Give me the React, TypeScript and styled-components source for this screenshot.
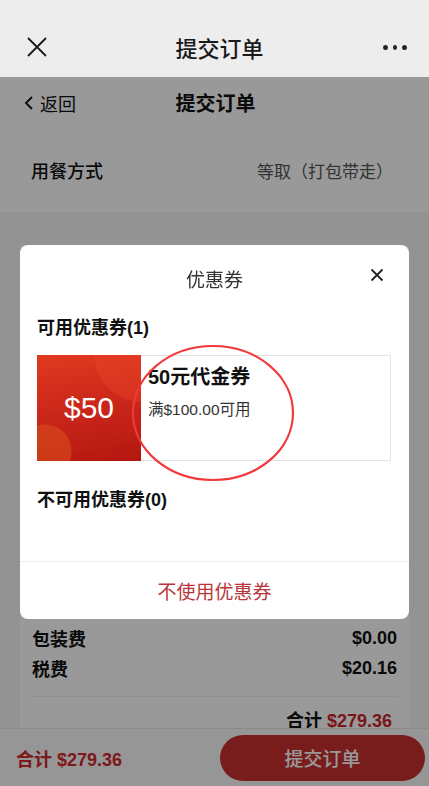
import React from "react";
import styled, { createGlobalStyle } from "styled-components";

const GlobalStyle = createGlobalStyle`
  html, body {
    margin: 0;
    padding: 0;
    background: #f5f5f5;
    font-family: "Liberation Sans", "Noto Sans CJK SC", "Noto Sans", sans-serif;
  }
  #root {
    min-height: 786px;
  }
`;

const App = () => {
  return (
    <Page>
      <GlobalStyle />
      <NavBar>
        <NavIcon>
          <svg width="22" height="22" viewBox="0 0 22 22">
            <path d="M2 2 L20 20 M20 2 L2 20" stroke="#1a1a1a" strokeWidth="1.8" fill="none" />
          </svg>
        </NavIcon>
        <NavTitle>提交订单</NavTitle>
        <Dots>
          <Dot />
          <Dot />
          <Dot />
        </Dots>
      </NavBar>

      <Header>
        <Back>
          <svg width="10" height="16" viewBox="0 0 10 16">
            <path d="M8 2 L2 8 L8 14" stroke="#111" strokeWidth="1.8" fill="none" />
          </svg>
          返回
        </Back>
        <HeaderTitle>提交订单</HeaderTitle>
        <Back style={{ visibility: "hidden" }} />
      </Header>

      <InfoRow>
        <Label>用餐方式</Label>
        <Value>等取（打包带走）</Value>
      </InfoRow>

      <Card>
        {/* order items sit here, hidden under the coupon sheet */}
        <ItemsArea />
        <FeeRow>
          <span>包装费</span>
          <span>$0.00</span>
        </FeeRow>
        <FeeRow>
          <span>税费</span>
          <span>$20.16</span>
        </FeeRow>
        <Divider />
        <TotalRow>
          合计 <Red>$279.36</Red>
        </TotalRow>
      </Card>

      <BottomBar>
        <BarTotal>合计 $279.36</BarTotal>
        <SubmitButton>提交订单</SubmitButton>
      </BottomBar>

      <Overlay />

      <Modal>
        <ModalHeader>
          优惠券
          <CloseButton>
            <svg width="14" height="14" viewBox="0 0 14 14">
              <path d="M1.5 1.5 L12.5 12.5 M12.5 1.5 L1.5 12.5" stroke="#222" strokeWidth="1.8" fill="none" />
            </svg>
          </CloseButton>
        </ModalHeader>
        <ModalBody>
          <SectionTitle>可用优惠券(1)</SectionTitle>
          <Coupon>
            <CouponAmount>$50</CouponAmount>
            <CouponInfo>
              <CouponName>50元代金券</CouponName>
              <CouponRule>满$100.00可用</CouponRule>
            </CouponInfo>
          </Coupon>
          <SectionTitle $gap={26}>不可用优惠券(0)</SectionTitle>
        </ModalBody>
        <ModalFooter>不使用优惠券</ModalFooter>
        <Marker width="166" height="140" viewBox="0 0 166 140">
          <ellipse cx="83" cy="70" rx="80" ry="67" stroke="#f2383a" strokeWidth="2.2" fill="none" />
        </Marker>
      </Modal>
    </Page>
  );
};

export default App;

const Page = styled.div`
  position: relative;
  width: 100%;
  min-height: 786px;
  background: #f5f5f5;
`;

const NavBar = styled.div`
  position: relative;
  z-index: 30;
  height: 77px;
  background: #ededed;
  display: flex;
  align-items: center;
  justify-content: space-between;
  padding: 17px 22px 0 26px;
  box-sizing: border-box;
`;

const NavIcon = styled.div`
  width: 22px;
  height: 22px;
  display: flex;
`;

const NavTitle = styled.div`
  font-size: 22px;
  color: #1a1a1a;
  font-weight: 500;
  margin-left: 8px;
`;

const Dots = styled.div`
  display: flex;
  gap: 5px;
  width: 24px;
`;

const Dot = styled.div`
  width: 5px;
  height: 5px;
  border-radius: 50%;
  background: #222;
`;

const Header = styled.div`
  height: 51px;
  background: #fff;
  border-bottom: 1px solid #ececec;
  display: flex;
  align-items: center;
  justify-content: space-between;
  padding: 0 24px;
`;

const Back = styled.div`
  display: flex;
  align-items: center;
  gap: 6px;
  font-size: 18px;
  color: #111;
  width: 70px;
`;

const HeaderTitle = styled.div`
  font-size: 20px;
  font-weight: 700;
  color: #111;
  margin-left: 2px;
`;

const InfoRow = styled.div`
  height: 84px;
  background: #fff;
  display: flex;
  align-items: center;
  justify-content: space-between;
  padding: 0 36px 0 31px;
  margin-top: -1px;
`;

const Label = styled.div`
  font-size: 18px;
  color: #111;
  font-weight: 500;
`;

const Value = styled.div`
  font-size: 17px;
  color: #555;
`;

const Card = styled.div`
  margin: 33px 20px 0;
  background: #fff;
  padding: 0 12px;
  min-height: 483px;
  box-sizing: border-box;
`;

const ItemsArea = styled.div`
  height: 378px;
`;

const FeeRow = styled.div`
  display: flex;
  justify-content: space-between;
  align-items: center;
  height: 30px;
  font-size: 18px;
  font-weight: 700;
  color: #111;
`;

const Divider = styled.div`
  height: 1px;
  background: #eee;
  margin-top: 13px;
`;

const TotalRow = styled.div`
  text-align: right;
  font-size: 18px;
  font-weight: 700;
  color: #111;
  padding: 9px 5px 0 0;
`;

const Red = styled.span`
  color: #c8252d;
`;

const BottomBar = styled.div`
  position: fixed;
  left: 0;
  right: 0;
  bottom: 0;
  height: 58px;
  background: #fafafa;
  border-top: 1px solid #e6e6e6;
  box-sizing: border-box;
  display: flex;
  align-items: center;
  justify-content: space-between;
  padding: 0 4px 0 16px;
`;

const BarTotal = styled.div`
  font-size: 18px;
  font-weight: 700;
  color: #d0282e;
`;

const SubmitButton = styled.div`
  width: 205px;
  height: 46px;
  border-radius: 23px;
  background: #c8302f;
  color: #fff;
  font-size: 19px;
  font-weight: 500;
  display: flex;
  align-items: center;
  justify-content: center;
`;

const Overlay = styled.div`
  position: fixed;
  inset: 0;
  z-index: 10;
  background: rgba(0, 0, 0, 0.4);
`;

const Modal = styled.div`
  position: absolute;
  z-index: 20;
  top: 245px;
  left: 20px;
  width: 389px;
  height: 374px;
  background: #fff;
  border-radius: 8px;
  display: flex;
  flex-direction: column;
`;

const ModalHeader = styled.div`
  position: relative;
  height: 66px;
  display: flex;
  align-items: center;
  justify-content: center;
  font-size: 19px;
  color: #333;
`;

const CloseButton = styled.div`
  position: absolute;
  right: 25px;
  top: 23px;
  display: flex;
`;

const ModalBody = styled.div`
  flex: 1;
  padding: 0 18px 0 17px;
`;

const SectionTitle = styled.div<{ $gap?: number }>`
  margin-top: ${(p) => p.$gap ?? 4}px;
  font-size: 18px;
  font-weight: 700;
  line-height: 26px;
  color: #111;
`;

const Coupon = styled.div`
  margin-top: 14px;
  height: 106px;
  display: flex;
  border: 1px solid #e3e3e3;
  box-sizing: border-box;
`;

const CouponAmount = styled.div`
  width: 104px;
  margin: -1px 0 -1px -1px;
  display: flex;
  align-items: center;
  justify-content: center;
  color: #fff;
  font-size: 30px;
  background:
    radial-gradient(circle at 8px 96px, rgba(214, 70, 24, 0.7) 0, rgba(214, 70, 24, 0.7) 26px, transparent 27px),
    radial-gradient(circle at 104px 0px, rgba(236, 70, 40, 0.35) 0, rgba(236, 70, 40, 0.35) 46px, transparent 47px),
    linear-gradient(170deg, #e03a1f 0%, #c8251a 55%, #b3170f 100%);
`;

const CouponInfo = styled.div`
  padding: 6px 0 0 7px;
  display: flex;
  flex-direction: column;
`;

const CouponName = styled.div`
  font-size: 20px;
  font-weight: 700;
  color: #111;
  line-height: 30px;
`;

const CouponRule = styled.div`
  margin-top: 5px;
  font-size: 15.5px;
  color: #333;
`;

const ModalFooter = styled.div`
  height: 57px;
  border-top: 1px solid #eee;
  display: flex;
  align-items: center;
  justify-content: center;
  font-size: 19px;
  color: #b8363a;
`;

const Marker = styled.svg`
  position: absolute;
  left: 110px;
  top: 98px;
  pointer-events: none;
`;
